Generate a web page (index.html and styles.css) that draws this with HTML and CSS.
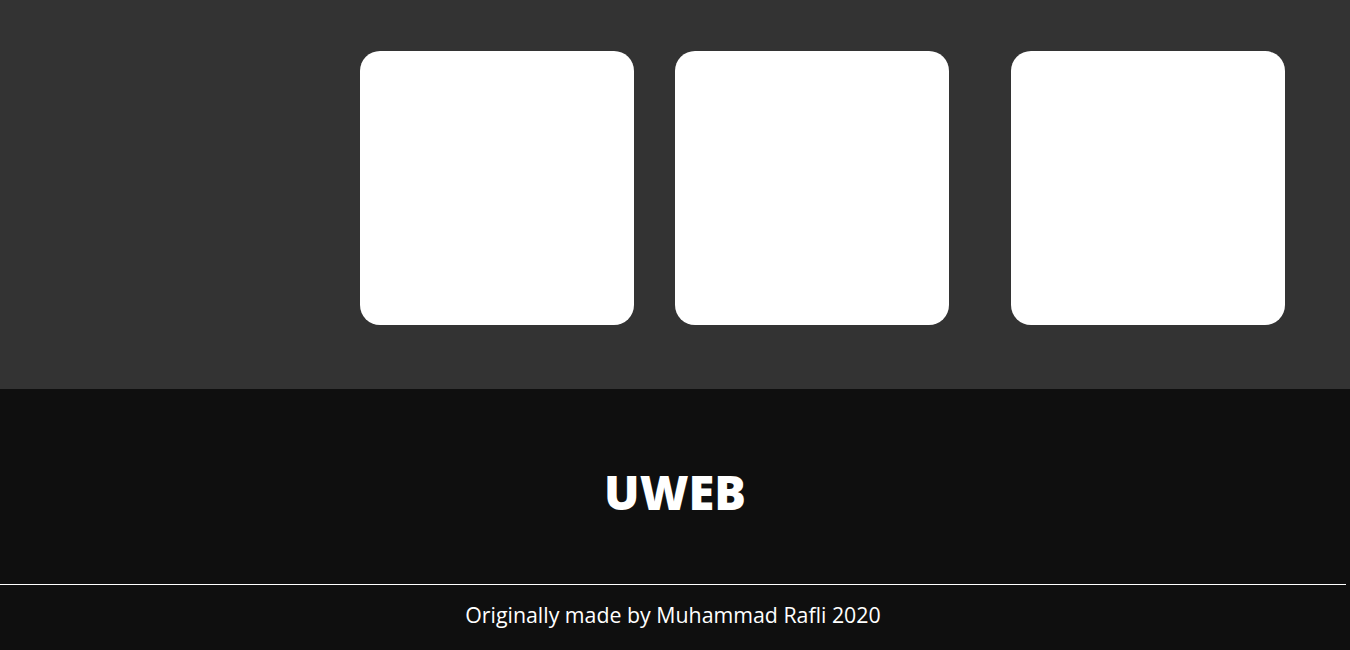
FILE: index.html
```html
<!DOCTYPE html>
<html>
<head>
<meta charset="utf-8">
<link rel="stylesheet" href="styles.css">
</head>
<body>
<section class="showcase">
  <div class="card"></div>
  <div class="card card-second"></div>
  <div class="card card-third"></div>
</section>
<footer class="footer">
  <h2 class="brand">UWEB</h2>
  <hr class="rule">
  <p class="credit">Originally made by Muhammad Rafli 2020</p>
</footer>
</body>
</html>
```
FILE: styles.css
```css
html, body {
  margin: 0;
  padding: 0;
  background: #0f0f0f;
  font-family: "Open Sans", "Liberation Sans", sans-serif;
}
.showcase {
  background: #333333;
  height: 389px;
  box-sizing: border-box;
  padding: 51px 0 0 360px;
  display: flex;
  align-items: flex-start;
}
.card {
  width: 274px;
  height: 274px;
  background: #ffffff;
  border-radius: 20px;
  flex: none;
}
.card-second {
  margin-left: 41px;
}
.card-third {
  margin-left: 62px;
}
.footer {
  background: #0f0f0f;
  height: 261px;
  box-sizing: border-box;
  padding-top: 70px;
  color: #ffffff;
  text-align: center;
}
.brand {
  margin: 0;
  font-size: 47px;
  font-weight: 800;
  line-height: 66px;
  height: 66px;
}
.rule {
  margin: 59px 4px 0 0;
  border: none;
  height: 1px;
  background: #ffffff;
}
.credit {
  margin: 16px 0 0;
  padding-right: 4px;
  font-size: 21.33px;
  line-height: 28px;
}
```
